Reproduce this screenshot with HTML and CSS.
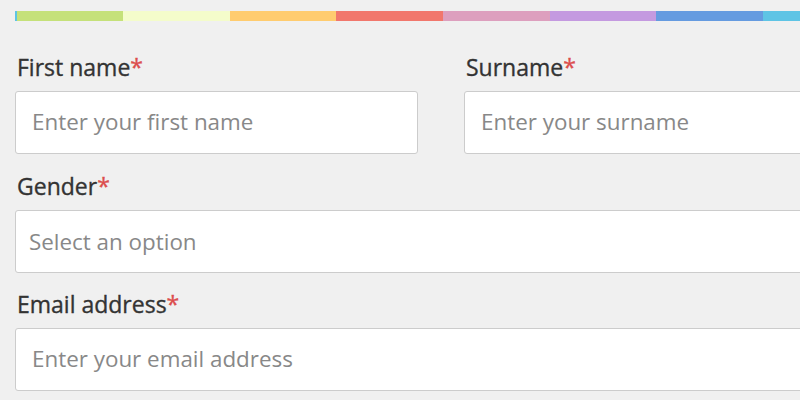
FILE: index.html
```html
<!DOCTYPE html>
<html lang="en">
<head>
<meta charset="utf-8">
<title>Registration form</title>
<link rel="stylesheet" href="styles.css">
</head>
<body>
<form class="form">
  <div class="bar">
    <span class="seg seg-sliver"></span>
    <span class="seg seg-green"></span>
    <span class="seg seg-yellow"></span>
    <span class="seg seg-orange"></span>
    <span class="seg seg-red"></span>
    <span class="seg seg-pink"></span>
    <span class="seg seg-purple"></span>
    <span class="seg seg-blue"></span>
    <span class="seg seg-cyan"></span>
  </div>
  <div class="row row-split">
    <div class="field">
      <label class="label" for="first">First name<span class="req">*</span></label>
      <input class="control" id="first" type="text" placeholder="Enter your first name">
    </div>
    <div class="field">
      <label class="label" for="surname">Surname<span class="req">*</span></label>
      <input class="control" id="surname" type="text" placeholder="Enter your surname">
    </div>
  </div>
  <div class="row">
    <div class="field">
      <label class="label" for="gender">Gender<span class="req">*</span></label>
      <div class="control control-select" id="gender">Select an option</div>
    </div>
  </div>
  <div class="row">
    <div class="field">
      <label class="label" for="email">Email address<span class="req">*</span></label>
      <input class="control" id="email" type="email" placeholder="Enter your email address">
    </div>
  </div>
</form>
</body>
</html>
```

FILE: styles.css
```css
html, body {
  margin: 0;
  padding: 0;
  background: #f0f0f0;
  overflow: hidden;
}
body {
  font-family: "Open Sans", "Noto Sans", sans-serif;
  color: #333333;
}
.form {
  margin: 0 0 0 15px;
  padding-top: 11px;
  width: 854px;
}
.bar {
  display: flex;
  height: 10px;
  margin-bottom: 31px;
}
.seg {
  flex: 0 0 106.6px;
  height: 100%;
}
.seg-sliver { flex: 0 0 1.7px; background: #5ec4e5; }
.seg-green { background: #c5e17a; }
.seg-yellow { background: #f4fccb; }
.seg-orange { background: #ffcc6f; }
.seg-red { background: #f1776c; }
.seg-pink { background: #dd9fbe; }
.seg-purple { background: #c49ae0; }
.seg-blue { background: #659be0; }
.seg-cyan { background: #5ec4e5; }
.row {
  margin-bottom: 16.5px;
}
.row-split {
  display: grid;
  grid-template-columns: 403px 403px;
  column-gap: 46px;
}
.label {
  display: block;
  padding-left: 2px;
  font-size: 23px;
  font-weight: 400;
  -webkit-text-stroke: 0.35px currentColor;
  line-height: 30px;
  margin-bottom: 9px;
  color: #333333;
}
.req {
  color: #dc4d4d;
}
.control {
  display: block;
  box-sizing: border-box;
  width: 100%;
  height: 63px;
  margin: 0;
  padding: 0 16px 3px;
  border: 1px solid #cccccc;
  border-radius: 3px;
  background: #ffffff;
  font-family: "Open Sans", "Noto Sans", sans-serif;
  font-size: 22.4px;
  color: #333333;
  outline: none;
}
.control::placeholder {
  color: #888888;
  opacity: 1;
}
.control-select {
  display: flex;
  align-items: center;
  padding: 0 16px 0 13px;
  color: #888888;
}
```
